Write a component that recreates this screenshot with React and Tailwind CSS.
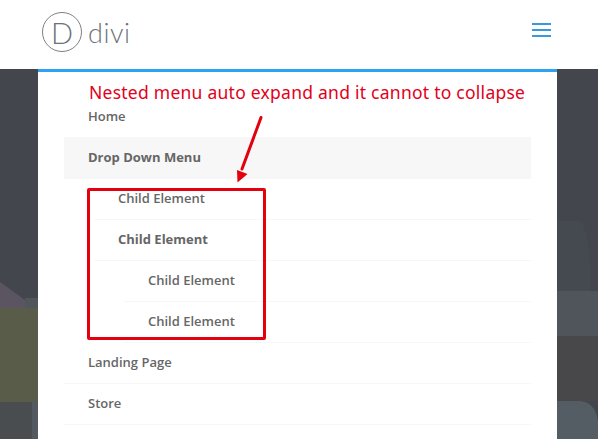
import React from "react";

function Row({ label, bold, active, indent = "pl-6" }) {
  return (
    <li
      className={`h-[41px] flex items-center border-b border-[#f7f7f7] ${indent} ${
        active ? "bg-[#f7f7f7]" : ""
      } ${bold ? "font-bold" : "font-semibold"}`}
    >
      {label}
    </li>
  );
}

function Backdrop() {
  return (
    <svg className="absolute inset-0" width="598" height="370" viewBox="0 0 598 370">
      <rect width="598" height="370" fill="#43474d" />
      <path d="M0 213 L36 239 L0 239 Z" fill="#5a5560" />
      <rect x="25" y="229" width="13" height="10" fill="#51565b" />
      <rect x="0" y="239" width="38" height="94" fill="#585c49" />
      <rect x="0" y="333" width="38" height="37" fill="#4a4d50" />
      <rect x="32" y="333" width="6" height="37" fill="#535960" />
      <path d="M557 152 H580 Q590 160 591 222 H557 Z" fill="#454a51" />
      <rect x="557" y="222" width="41" height="45" fill="#50555c" />
      <rect x="557" y="267" width="41" height="65" fill="#48484b" />
      <path d="M557 332 H578 Q595 332 598 352 V370 H557 Z" fill="#555d64" />
    </svg>
  );
}

export default function App() {
  return (
    <div className="w-[598px] h-[439px] overflow-hidden flex flex-col bg-white font-['Open_Sans',sans-serif]">
      <header className="h-[69px] shrink-0 flex items-center justify-between pl-[42px] pr-[47px] pb-[5px] bg-white">
        <div className="flex items-center gap-[6px] text-[#6d727a] font-['Lato',sans-serif] font-light">
          <div className="w-[40px] h-[40px] rounded-full border-[1.5px] border-[#7b8087] flex items-center justify-center text-[29px] leading-none">
            D
          </div>
          <span className="text-[27px] leading-none tracking-[0.5px]">divi</span>
        </div>
        <svg className="mb-[4px]" width="19" height="14" viewBox="0 0 19 14" fill="none" stroke="#3a98dc" strokeWidth="2">
          <path d="M0 1H19M0 7H19M0 13H19" />
        </svg>
      </header>

      <main className="relative flex-1 pl-[38px] pr-[41px]">
        <Backdrop />
        <div className="relative h-full bg-white border-t-[3px] border-[#2ea3f2] pt-[25px] px-[26px] text-[13px] text-[#666]">
          <ul>
            <Row label="Home" />
            <Row label="Drop Down Menu" bold active />
            <li>
              <ul className="pl-[30px]">
                <Row label="Child Element" />
                <Row label="Child Element" bold />
                <li>
                  <ul className="pl-[30px]">
                    <Row label="Child Element" />
                    <Row label="Child Element" />
                  </ul>
                </li>
              </ul>
            </li>
            <Row label="Landing Page" />
            <Row label="Store" />
          </ul>
        </div>

        {/* annotation drawn on top of the menu */}
        <p className="absolute left-[89px] top-[9px] text-[17.5px] leading-[28px] tracking-[0.25px] text-[#e2001a] whitespace-nowrap font-['Noto_Sans',sans-serif]">
          Nested menu auto expand and it cannot to collapse
        </p>
        <div className="absolute left-[87px] top-[119px] w-[179px] h-[152px] border-[3px] border-[#e3000f] rounded-[2px]" />
        <svg className="absolute left-[230px] top-[45px]" width="36" height="72" viewBox="0 0 36 72" fill="none">
          <path d="M31 3.5L12 55" stroke="#e3000f" strokeWidth="3" strokeLinecap="round" />
          <path d="M7.5 68.5L7 56L17.5 60Z" fill="#e3000f" />
        </svg>
      </main>
    </div>
  );
}
